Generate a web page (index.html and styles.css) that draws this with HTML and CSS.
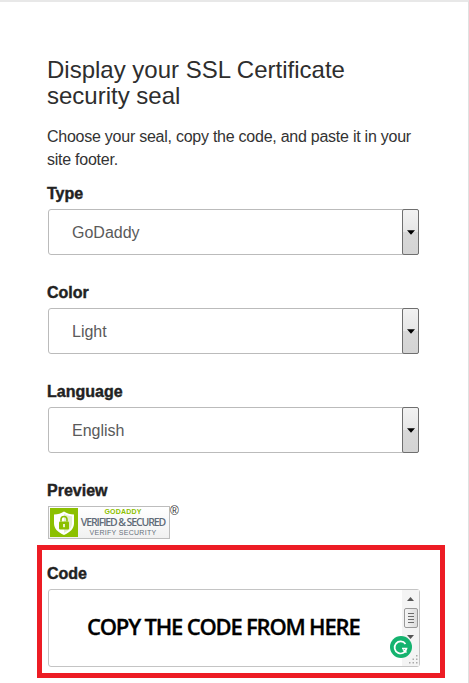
FILE: index.html
```html
<!DOCTYPE html>
<html lang="en">
<head>
<meta charset="utf-8">
<title>Display your SSL Certificate security seal</title>
<link rel="stylesheet" href="styles.css">
</head>
<body>
<main class="page">
  <h1 class="title">Display your SSL Certificate security seal</h1>
  <p class="intro">Choose your seal, copy the code, and paste it in your site footer.</p>

  <div class="field">
    <div class="label">Type</div>
    <div class="select">
      <span class="select-value">GoDaddy</span>
      <span class="select-btn"><svg class="caret" width="9" height="5" viewBox="0 0 9 5"><path d="M0 0h9L4.5 5z"/></svg></span>
    </div>
  </div>

  <div class="field">
    <div class="label">Color</div>
    <div class="select">
      <span class="select-value">Light</span>
      <span class="select-btn"><svg class="caret" width="9" height="5" viewBox="0 0 9 5"><path d="M0 0h9L4.5 5z"/></svg></span>
    </div>
  </div>

  <div class="field">
    <div class="label">Language</div>
    <div class="select">
      <span class="select-value">English</span>
      <span class="select-btn"><svg class="caret" width="9" height="5" viewBox="0 0 9 5"><path d="M0 0h9L4.5 5z"/></svg></span>
    </div>
  </div>

  <div class="preview">
    <div class="label">Preview</div>
    <div class="seal-row">
      <div class="seal">
        <span class="seal-mark">
          <svg width="28" height="28" viewBox="0 0 28 28">
            <path d="M14 2.5c3 2 6 3 10 3v9c0 5-4 9-10 11.5C8 23.500 4 19.500 4 14.500v-9c4 0 7-1 10-3z" fill="#fff"/>
            <path d="M14 4.500c3 1.800 5.500 2.500 8 2.700v7.300c0 4-3 7.300-8 9.400z" fill="#e4eed0"/>
            <rect x="9" y="12.500" width="10" height="8" rx="1" fill="#8cc000"/>
            <path d="M11 12.500v-2a3 3 0 0 1 6 0v2" fill="none" stroke="#8cc000" stroke-width="1.600"/>
            <rect x="13.200" y="15" width="1.600" height="3.200" fill="#fff"/>
          </svg>
        </span>
        <span class="seal-text">
          <span class="seal-brand">GODADDY</span>
          <span class="seal-main">VERIFIED &amp; SECURED</span>
          <span class="seal-verify">VERIFY SECURITY</span>
        </span>
      </div>
      <span class="reg">®</span>
    </div>
  </div>

  <section class="code-box">
    <div class="label">Code</div>
    <div class="textarea">
      <span class="copy-note">COPY THE CODE FROM HERE</span>
      <div class="scrollbar">
        <svg width="9" height="5" viewBox="0 0 9 5" class="arrow"><path d="M4.500 0L9 5H0z"/></svg>
        <span class="thumb"><i></i><i></i><i></i><i></i></span>
        <svg width="9" height="5" viewBox="0 0 9 5" class="arrow"><path d="M0 0h9L4.500 5z"/></svg>
        <svg class="grip" width="10" height="10" viewBox="0 0 10 10"><path d="M8 1h1.500v1.500H8zM4.500 4.500H6V6H4.500zM8 4.500h1.500V6H8zM1 8h1.500v1.500H1zM4.500 8H6v1.500H4.500zM8 8h1.500v1.500H8z"/></svg>
      </div>
      <span class="grammarly">
        <svg width="22" height="22" viewBox="0 0 22 22">
          <circle cx="11" cy="11" r="11" fill="#15b36f"/>
          <path d="M15.500 8a6 6 0 1 0 1 4.500H12" fill="none" stroke="#fff" stroke-width="1.700"/>
          <path d="M13 13.500l3.500 3" fill="none" stroke="#fff" stroke-width="1.500"/>
        </svg>
      </span>
    </div>
  </section>
</main>
</body>
</html>
```

FILE: styles.css
```css
* { box-sizing: border-box; }

html, body {
  margin: 0;
  height: 100%;
  background: #fff;
  overflow: hidden;
}

body {
  font-family: "Liberation Sans", Arial, sans-serif;
  color: #333;
}

.page {
  height: 683px;
  border-top: 2px solid #e8e8e8;
  border-right: 1px solid #e0e0e0;
  padding: 55px 0 0 47px;
}

.title {
  margin: 0;
  width: 340px;
  font-size: 24px;
  font-weight: 400;
  line-height: 26px;
  color: #2e2e2e;
}

.intro {
  margin: 16px 0 0;
  width: 372px;
  font-size: 16px;
  line-height: 23px;
  letter-spacing: -0.25px;
  color: #333;
}

.label {
  font-family: "Liberation Sans", Arial, sans-serif;
  font-size: 16px;
  font-weight: 700;
  line-height: 20px;
  padding-top: 1px;
  color: #222;
  -webkit-text-stroke: 0.4px #222;
}

.field + .field { margin-top: 27px; }
.intro + .field { margin-top: 12px; }

.field .label { margin-bottom: 5px; }

.select {
  display: flex;
  width: 371px;
  height: 46px;
  margin-left: 1px;
  border: 1px solid #bbb;
  border-radius: 3px;
  align-items: stretch;
  justify-content: space-between;
}

.select-value {
  padding-left: 23px;
  font-size: 16px;
  line-height: 46px;
  color: #5a5a5a;
}

.select-btn {
  display: flex;
  width: 17px;
  margin: -1px -1px -1px 0;
  border: 1px solid #6f6f6f;
  border-radius: 2px;
  align-items: center;
  justify-content: center;
  background: linear-gradient(#f2f2f2 0, #e6e6e6 50%, #d8d8d8 50%, #d4d4d4 100%);
}

.caret { width: 8px; height: 5px; fill: #000; }

.preview { margin-top: 27px; }

.preview .label { margin-bottom: 5px; }

.seal-row { display: flex; align-items: flex-start; margin-left: 1px; }

.seal {
  display: flex;
  width: 122px;
  height: 33px;
  padding: 1px;
  border: 1px solid #bdbdbd;
  background: linear-gradient(#fff, #f1f1f1);
}

.seal-mark {
  display: flex;
  width: 28px;
  height: 29px;
  align-items: center;
  justify-content: center;
  background: #8cc000;
}

.seal-text {
  display: flex;
  flex: 1;
  flex-direction: column;
  align-items: center;
  justify-content: center;
  white-space: nowrap;
}

.seal-brand {
  font-size: 7px;
  font-weight: 700;
  line-height: 8px;
  color: #8cc000;
  letter-spacing: 0.2px;
}

.seal-main {
  font-family: "Open Sans", sans-serif;
  font-size: 10.5px;
  font-weight: 600;
  line-height: 12px;
  letter-spacing: -1.1px;
  color: #5f6b78;
}

.seal-verify {
  font-size: 7px;
  line-height: 9px;
  letter-spacing: 0.3px;
  color: #67717c;
}

.reg {
  font-size: 12px;
  line-height: 11px;
  margin-left: 0;
  color: #333;
}

.code-box {
  width: 408px;
  height: 133px;
  margin: 6px 0 0 -10px;
  padding: 13px 0 0 5px;
  border: 5px solid #ed1c24;
}

.code-box .label { margin-bottom: 5px; }

.textarea {
  position: relative;
  display: flex;
  width: 372px;
  height: 78px;
  border: 1px solid #c4c4c4;
  border-radius: 3px;
  padding-left: 38px;
  align-items: center;
  margin-left: 1px;
}

.copy-note {
  flex: 1;
  margin-top: -4px;
  font-family: "Open Sans", sans-serif;
  font-size: 22px;
  font-weight: 600;
  letter-spacing: -1.2px;
  color: #000;
  white-space: nowrap;
  -webkit-text-stroke: 0.3px #000;
}

.scrollbar {
  display: flex;
  flex-direction: column;
  width: 17px;
  height: 100%;
  align-items: center;
  background: #f4f4f4;
  padding-top: 7px;
}

.arrow { fill: #555; width: 7px; height: 4px; flex: none; }

.thumb {
  display: flex;
  flex-direction: column;
  width: 14px;
  height: 20px;
  margin: 7px 0 7px;
  padding: 4px 3px;
  gap: 2px;
  border: 1px solid #9a9a9a;
  border-radius: 2px;
  background: linear-gradient(90deg, #f5f5f5, #dcdcdc);
  flex: none;
}

.thumb i { display: block; height: 1px; background: #6b6b6b; }

.grip {
  position: absolute;
  right: 1px;
  bottom: 2px;
  fill: #aaa;
}

.grammarly {
  position: absolute;
  right: 7px;
  bottom: 8px;
  display: block;
  width: 22px;
  height: 22px;
}
```
